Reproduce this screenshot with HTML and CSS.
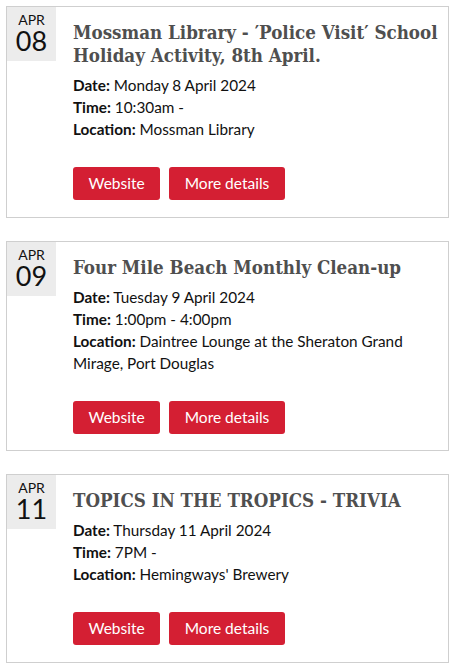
FILE: index.html
```html
<!DOCTYPE html>
<html>
<head>
<meta charset="utf-8">
<link rel="stylesheet" href="styles.css">
</head>
<body>
<div class="events">
  <div class="event">
    <div class="badge"><span class="month">APR</span><span class="day">08</span></div>
    <div class="content">
      <h2 class="title">Mossman Library - ′Police Visit′ School Holiday Activity, 8th April.</h2>
      <p class="meta"><b>Date:</b> Monday 8 April 2024</p>
      <p class="meta"><b>Time:</b> 10:30am -</p>
      <p class="meta"><b>Location:</b> Mossman Library</p>
      <div class="actions"><a class="btn">Website</a><a class="btn">More details</a></div>
    </div>
  </div>
  <div class="event">
    <div class="badge"><span class="month">APR</span><span class="day">09</span></div>
    <div class="content">
      <h2 class="title">Four Mile Beach Monthly Clean-up</h2>
      <p class="meta"><b>Date:</b> Tuesday 9 April 2024</p>
      <p class="meta"><b>Time:</b> 1:00pm - 4:00pm</p>
      <p class="meta"><b>Location:</b> Daintree Lounge at the Sheraton Grand Mirage, Port Douglas</p>
      <div class="actions"><a class="btn">Website</a><a class="btn">More details</a></div>
    </div>
  </div>
  <div class="event">
    <div class="badge"><span class="month">APR</span><span class="day">11</span></div>
    <div class="content">
      <h2 class="title">TOPICS IN THE TROPICS - TRIVIA</h2>
      <p class="meta"><b>Date:</b> Thursday 11 April 2024</p>
      <p class="meta"><b>Time:</b> 7PM -</p>
      <p class="meta"><b>Location:</b> Hemingways' Brewery</p>
      <div class="actions"><a class="btn">Website</a><a class="btn">More details</a></div>
    </div>
  </div>
</div>
</body>
</html>
```
FILE: styles.css
```css
html, body {
  margin: 0;
  padding: 0;
  background: #fff;
}
body {
  font-family: Lato, "Open Sans", sans-serif;
  color: #111;
}
.events {
  padding: 6px 4px 0 6px;
  display: flex;
  flex-direction: column;
  gap: 23px;
}
.event {
  border: 1px solid #cfcfcf;
  display: flex;
  align-items: flex-start;
}
.badge {
  width: 49px;
  height: 54px;
  background: #ececec;
  display: flex;
  flex-direction: column;
  align-items: center;
  padding-top: 5px;
  box-sizing: border-box;
}
.month {
  font-size: 14px;
  line-height: 16px;
  color: #111;
}
.day {
  font-size: 27px;
  line-height: 26px;
  color: #111;
}
.content {
  flex: 1;
  padding: 14px 6px 16.5px 17px;
}
.title {
  margin: 0 0 7px;
  font-family: "DejaVu Serif Condensed", "DejaVu Serif", serif;
  font-weight: bold;
  font-size: 18.6px;
  line-height: 23px;
  color: #4f4f4f;
}
.meta {
  margin: 0;
  font-size: 15.3px;
  line-height: 22px;
}
.meta b {
  font-weight: bold;
}
.actions {
  display: flex;
  gap: 9px;
  margin-top: 27px;
}
.btn {
  display: block;
  background: #d41f33;
  color: #fff;
  font-size: 15.5px;
  line-height: 17px;
  padding: 8px 15.5px;
  border-radius: 3px;
}
```
